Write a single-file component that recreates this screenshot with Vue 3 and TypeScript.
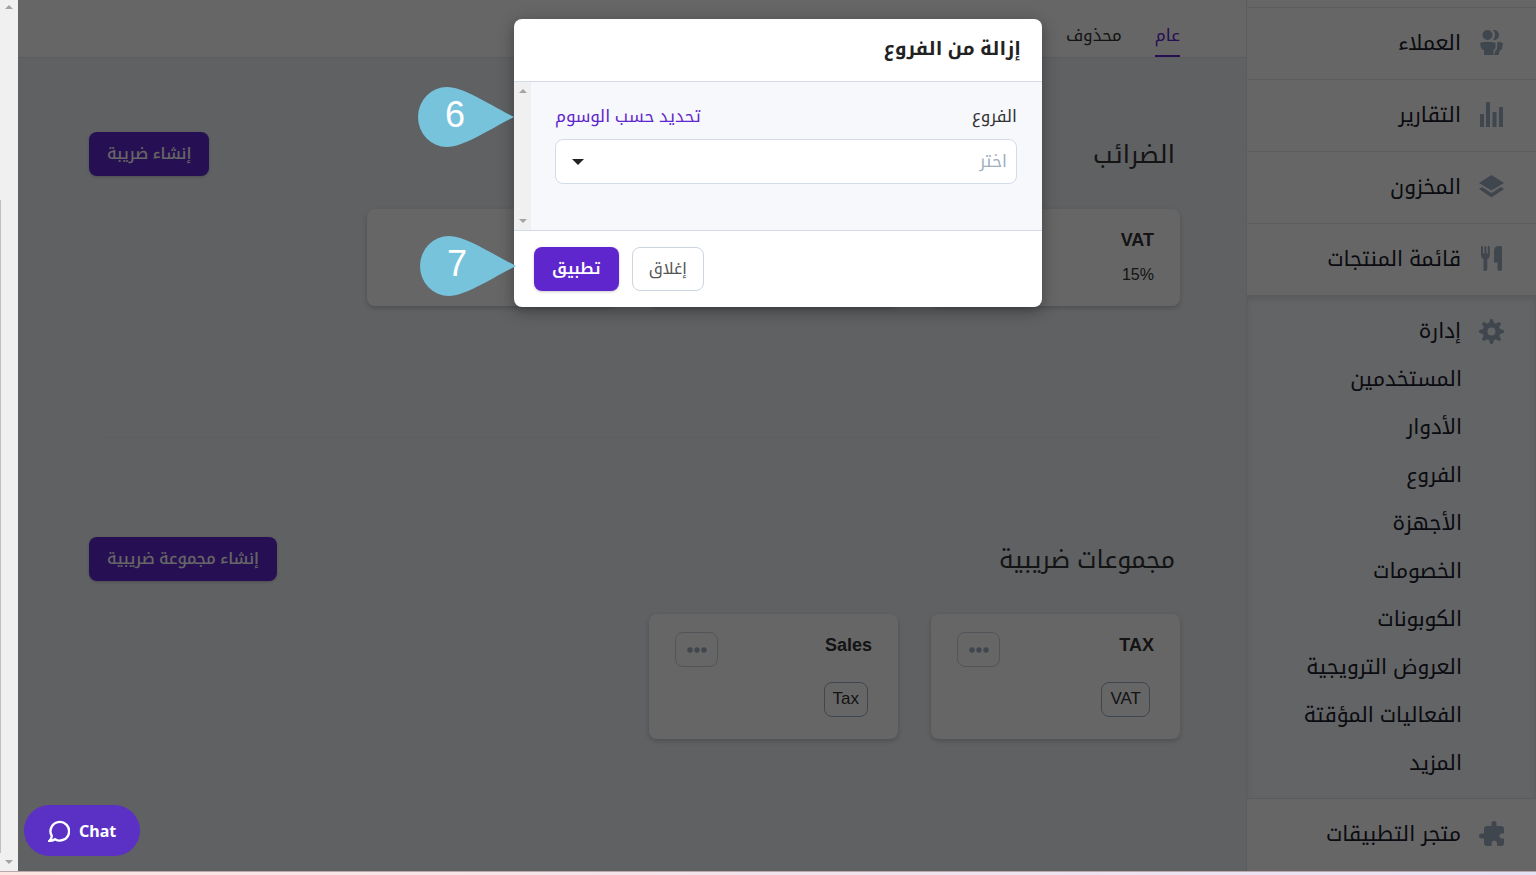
<script setup lang="ts">
const menu = [
  { id: 'customers', label: 'العملاء' },
  { id: 'reports', label: 'التقارير' },
  { id: 'inventory', label: 'المخزون' },
  { id: 'products', label: 'قائمة المنتجات' },
]
const icons: Record<string, string> = {
  customers: 'M8.500 0a5 5 0 1 1 0 10A5 5 0 0 1 8.500 0zM14 0a5 5 0 0 1 2 10h-2q4-5 0-10zM1 13q1.500-1 7.500-1.200Q14.500 12 16.500 13V18q-1 2-2 2v5H5v-5q-2 0-3-2zM18.500 12H21q3 .5 3 2l-1.500 6H21l-1.500 5H15l1.500-4.500Q18 20 18 18z',
  reports: 'M1 12h4v13H1zM7 0h4v25H7zM13.500 10h4v15h-4zM20 5h4v20h-4z',
  inventory: 'M12.500 1L25 9L12.500 16.500L0 9zM3 13L12.500 19L22 13L25 15L12.500 23.500L0 15z',
  products: 'M2 1q0-1 1-1t1 1v6q.7 1 1.400 0V1q0-1 1-1t1 1v6q.7 1 1.400 0V1q0-1 1-1t1 1v8q0 3-2.500 4v10q0 2-2.300 2T4.500 23V13Q2 12 2 9zM23 1v22q0 2-2.300 2T18.500 23v-6.500H15V5q0-5 5-5h2q1 0 1 1z',
}
const subMenu = ['المستخدمين', 'الأدوار', 'الفروع', 'الأجهزة', 'الخصومات', 'الكوبونات', 'العروض الترويجية', 'الفعاليات المؤقتة', 'المزيد']
const groups = [
  { name: 'TAX', tag: 'VAT' },
  { name: 'Sales', tag: 'Tax' },
]
const steps = [6, 7]
const gearTeeth = [0, 45, 90, 135, 180, 225, 270, 315]
</script>

<template>
  <div class="screen" dir="rtl">
    <div class="app">
      <aside class="sidebar">
        <nav>
          <a v-for="item in menu" :key="item.id" href="#" class="nav-item">
            <svg class="nav-icon" viewBox="0 0 25 25"><path :d="icons[item.id]" /></svg>
            <span>{{ item.label }}</span>
          </a>
          <div class="nav-group">
            <a href="#" class="nav-head">
              <svg class="nav-icon" viewBox="-12.5 -12.5 25 25">
                <path fill-rule="evenodd" d="M0-8.500A8.500 8.500 0 1 1 0 8.500A8.500 8.500 0 1 1 0-8.500zM0-4A4 4 0 1 0 0 4A4 4 0 1 0 0-4z" />
                <path v-for="a in gearTeeth" :key="a" :transform="`rotate(${a})`" d="M-3.500-7.500Q-2-8.500-1.500-12Q0-13 1.500-12Q2-8.500 3.500-7.500z" />
              </svg>
              <span>إدارة</span>
            </a>
            <a v-for="label in subMenu" :key="label" href="#" class="nav-sub">{{ label }}</a>
          </div>
          <a href="#" class="nav-item">
            <svg class="nav-icon" viewBox="0 0 25 25">
              <path d="M5 8q0-3 3-3h4.500V2.500a2.500 2.500 0 0 1 5 0V5H22q3 0 3 3v4.500h-2a2.500 2.500 0 0 0 0 5h2V22q0 3-3 3h-4v-2.500a2.700 2.700 0 0 0-5.400 0V25H8q-3 0-3-3v-4.500H2.500a2.500 2.500 0 0 1 0-5H5z" />
            </svg>
            <span>متجر التطبيقات</span>
          </a>
        </nav>
      </aside>

      <main class="main">
        <nav class="tabs">
          <a href="#" class="tab active">عام</a>
          <a href="#" class="tab">محذوف</a>
        </nav>
        <div class="content">
          <section class="taxes">
            <header class="section-head">
              <h2>الضرائب</h2>
              <button type="button" class="btn primary">إنشاء ضريبة</button>
            </header>
            <div class="cards">
              <article class="card">
                <h3>VAT</h3>
                <p dir="ltr">15%</p>
              </article>
              <article class="card"></article>
              <article class="card"></article>
            </div>
            <hr />
          </section>
          <section class="groups">
            <header class="section-head">
              <h2>مجموعات ضريبية</h2>
              <button type="button" class="btn primary">إنشاء مجموعة ضريبية</button>
            </header>
            <div class="cards">
              <article v-for="g in groups" :key="g.name" class="card tall">
                <div class="card-top">
                  <h3>{{ g.name }}</h3>
                  <button type="button" class="more" aria-label="المزيد">
                    <svg viewBox="0 0 20 6"><circle cx="3" cy="3" r="2.7" /><circle cx="10" cy="3" r="2.7" /><circle cx="17" cy="3" r="2.7" /></svg>
                  </button>
                </div>
                <span class="tag">{{ g.tag }}</span>
              </article>
            </div>
          </section>
        </div>
      </main>

      <div class="scrollbar page-scroll">
        <svg viewBox="0 0 8 4"><path d="M0 4L4 0L8 4z" /></svg>
        <span class="thumb"></span>
        <svg viewBox="0 0 8 4"><path d="M0 0H8L4 4z" /></svg>
      </div>

      <div class="overlay">
        <div class="modal" role="dialog" aria-labelledby="modal-title">
          <header class="modal-head"><h1 id="modal-title">إزالة من الفروع</h1></header>
          <div class="modal-body">
            <div class="form">
              <div class="form-labels">
                <label for="branches">الفروع</label>
                <a href="#">تحديد حسب الوسوم</a>
              </div>
              <div class="select-wrap">
                <select id="branches"><option>اختر</option></select>
                <svg viewBox="0 0 12 6"><path d="M0 0H12L6 6z" /></svg>
              </div>
            </div>
            <div class="scrollbar">
              <svg viewBox="0 0 8 4"><path d="M0 4L4 0L8 4z" /></svg>
              <svg viewBox="0 0 8 4"><path d="M0 0H8L4 4z" /></svg>
            </div>
          </div>
          <footer class="modal-foot">
            <button type="button" class="btn outline">إغلاق</button>
            <button type="button" class="btn primary apply">تطبيق</button>
          </footer>
          <div v-for="n in steps" :key="n" class="pin" :class="`pin-${n}`">
            <svg viewBox="0 0 96 60"><path d="M96 30C72 18 46 0 29 0A29 30 0 0 0 29 60C46 60 72 42 96 30z" /></svg>
            <span>{{ n }}</span>
          </div>
        </div>
      </div>

      <button type="button" class="chat" dir="ltr">
        <svg viewBox="0 0 22 22"><path d="M3.800 16A9.300 9.300 0 1 1 7 19.200Q4.500 21 1.500 20.800Q3.600 19 3.800 16z" /></svg>
        <span>Chat</span>
      </button>
    </div>
    <div class="strip"></div>
  </div>
</template>

<style>
body {
  margin: 0;
}
</style>

<style scoped>
* {
  box-sizing: border-box;
}
h1, h2, h3, p {
  margin: 0;
}
a {
  color: inherit;
  text-decoration: none;
}
button, select {
  font: inherit;
}
.screen {
  min-height: 100vh;
  display: flex;
  flex-direction: column;
  font-family: "Liberation Sans", "Noto Kufi Arabic", "Noto Sans Arabic", "DejaVu Sans", sans-serif;
  font-size: 17px;
  line-height: 24px;
  color: #333;
}
.app {
  position: relative;
  flex: 1;
  display: flex;
  background: #edf2f7;
}
.strip {
  height: 4px;
  border-top: 1px solid #b9a9ab;
  background: linear-gradient(to left, #e6e2f6, #fde5e1);
}
.sidebar {
  width: 290px;
  flex: none;
  padding-top: 7px;
  background: #fff;
  border-left: 1px solid #e2e8f0;
  font-size: 21px;
  color: #1a202c;
}
.nav-item {
  height: 72px;
  display: flex;
  align-items: center;
  gap: 18px;
  padding: 0 32px 2px 0;
  border-top: 1px solid #e2e8f0;
}
.nav-icon {
  width: 25px;
  height: 25px;
  fill: #a0aec0;
}
.nav-group {
  padding: 12px 0 11px;
  background: #f7fafc;
  box-shadow: inset 0 4px 6px rgba(0, 0, 0, 0.1);
}
.nav-head {
  height: 48px;
  display: flex;
  align-items: center;
  gap: 18px;
  padding-right: 32px;
}
.nav-sub {
  height: 48px;
  display: flex;
  align-items: center;
  padding-right: 74px;
}
.main {
  flex: 1;
  min-width: 0;
}
.tabs {
  height: 58px;
  display: flex;
  align-items: flex-end;
  gap: 33px;
  padding: 0 66px;
  background: #fff;
  border-bottom: 1px solid #e2e8f0;
}
.tab {
  padding-bottom: 7px;
  border-bottom: 2px solid transparent;
}
.tab.active {
  color: #5f26cd;
  border-color: #5f26cd;
}
.content {
  padding: 74px 66px 0 67px;
}
.section-head {
  display: flex;
  align-items: center;
  justify-content: space-between;
  padding: 0 5px 0 4px;
  margin-bottom: 33px;
}
.section-head h2 {
  font-size: 25px;
  line-height: 36px;
  font-weight: 400;
}
.taxes {
  height: 405px;
}
hr {
  margin: 131px 16px 0;
  border: 0;
  border-top: 1px solid #e6ebf1;
}
.btn {
  height: 44px;
  padding: 0 18px;
  border-radius: 8px;
  border: 0;
  font-size: 16px;
}
.primary {
  background: #5f26cd;
  color: #fff;
  font-weight: 500;
  box-shadow: 0 1px 3px rgba(0, 0, 0, 0.2);
}
.cards {
  display: grid;
  grid-template-columns: repeat(4, 1fr);
  gap: 33px;
}
.card {
  min-height: 97px;
  padding: 18px 26px;
  background: #fff;
  border-radius: 8px;
  box-shadow: 0 2px 5px rgba(0, 0, 0, 0.2);
}
.card h3 {
  font-size: 18px;
  line-height: 26px;
}
.card p {
  margin-top: 10px;
  font-size: 16px;
  text-align: right;
}
.card.tall {
  min-height: 125px;
}
.card-top {
  display: flex;
  justify-content: space-between;
  height: 50px;
}
.more {
  width: 43px;
  height: 35px;
  display: grid;
  place-items: center;
  padding: 0;
  background: none;
  border: 1px solid #cbd5e0;
  border-radius: 8px;
}
.more svg {
  width: 20px;
  height: 6px;
  fill: #a0aec0;
}
.tag {
  display: inline-block;
  padding: 4px 8px 5px;
  margin-right: 4px;
  border: 1px solid #a0aec0;
  border-radius: 8px;
}
.scrollbar {
  width: 17px;
  flex: none;
  display: flex;
  flex-direction: column;
  justify-content: space-between;
  align-items: center;
  padding: 7px 0;
  background: #f0f0f0;
}
.scrollbar svg {
  width: 8px;
  height: 4px;
  fill: #a3a3a3;
}
.page-scroll {
  width: 18px;
  padding: 5px 0 7px;
}
.thumb {
  height: 76%;
  width: 1px;
  margin: auto auto 7px 0;
  background: #c0c0c0;
}
.overlay {
  position: absolute;
  inset: 0 0 0 18px;
  display: flex;
  justify-content: center;
  align-items: flex-start;
  padding: 19px 0 0 2px;
  background: rgba(0, 0, 0, 0.6);
}
.modal {
  position: relative;
  width: 528px;
  background: #fff;
  border-radius: 8px;
  box-shadow: 0 4px 16px rgba(0, 0, 0, 0.35);
}
.modal-head {
  padding: 14px 21px 16px;
  border-bottom: 1px solid #d5dae9;
}
.modal-head h1 {
  font-size: 19px;
  line-height: 32px;
  color: #222;
}
.modal-body {
  display: flex;
  height: 148px;
  background: #f7f8fc;
}
.form {
  flex: 1;
  padding: 23px 25px 0 24px;
}
.form-labels {
  display: flex;
  justify-content: space-between;
  line-height: 24px;
  margin-bottom: 10px;
}
.form-labels a {
  color: #5f26cd;
}
.select-wrap {
  position: relative;
}
.select-wrap select {
  appearance: none;
  width: 100%;
  height: 45px;
  padding: 0 9px;
  color: #a0aec0;
  background: #fff;
  border: 1px solid #d5dae9;
  border-radius: 8px;
}
.select-wrap svg {
  position: absolute;
  left: 17px;
  top: 20px;
  width: 12px;
  height: 6px;
  fill: #222;
}
.modal-foot {
  display: flex;
  justify-content: flex-end;
  gap: 13px;
  padding: 16px 20px;
  border-top: 1px solid #d5dae9;
}
.outline {
  padding: 0 16px;
  background: #fff;
  color: #555;
  border: 1px solid #cbd5e0;
}
.apply {
  font-weight: 600;
}
.pin {
  position: absolute;
  left: -96px;
  top: 68px;
  width: 96px;
  height: 60px;
}
.pin-7 {
  left: -94px;
  top: 217px;
}
.pin svg {
  width: 100%;
  height: 100%;
  fill: #78c3dc;
}
.pin span {
  position: absolute;
  left: 27px;
  top: 8px;
  font-size: 36px;
  line-height: 40px;
  color: #fff;
}
.chat {
  position: absolute;
  left: 24px;
  bottom: 15px;
  height: 51px;
  display: flex;
  align-items: center;
  gap: 9px;
  padding: 0 24px;
  border: 0;
  border-radius: 26px;
  background: #5a30c5;
  color: #fff;
  font-family: "Noto Sans", sans-serif;
  font-size: 16px;
  font-weight: 700;
}
.chat svg {
  width: 22px;
  height: 22px;
  fill: none;
  stroke: #fff;
  stroke-width: 2.400;
}
</style>
